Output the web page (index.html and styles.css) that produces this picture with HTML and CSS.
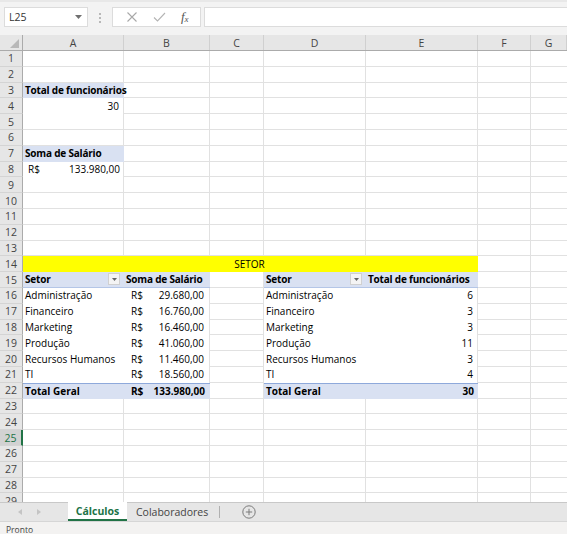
FILE: index.html
```html
<!DOCTYPE html>
<html lang="pt-BR">
<head>
    <meta charset="UTF-8">
    <meta name="viewport" content="width=device-width, initial-scale=1.0">
    <title>Cálculos - Planilha</title>
    <link rel="stylesheet" href="styles.css">
</head>
<body>
<div class="app">

    <!-- name box + formula bar -->
    <div class="formula-bar">
        <div class="name-box">
            <span>L25</span>
            <svg class="caret" width="7" height="4" viewBox="0 0 7 4"><path d="M0 0h7L3.5 4z" fill="#707070"/></svg>
        </div>
        <div class="grip"><i></i><i></i><i></i></div>
        <div class="fx-buttons">
            <svg width="12" height="12" viewBox="0 0 12 12"><path d="M1.5 1.5l9 9M10.5 1.5l-9 9" stroke="#a8a8a8" stroke-width="1.1" fill="none"/></svg>
            <svg width="13" height="12" viewBox="0 0 13 12"><path d="M1 6.5l3.5 3.5L12 2" stroke="#b4b4b4" stroke-width="1.1" fill="none"/></svg>
            <span class="fx">f<sub>x</sub></span>
        </div>
        <div class="formula-input"></div>
    </div>

    <div class="sheet">
        <div class="row col-head">
            <div class="corner"><svg width="9" height="9" viewBox="0 0 9 9"><path d="M9 0v9H0z" fill="#b8b8b8"/></svg></div>
            <div>A</div><div>B</div><div>C</div><div>D</div><div>E</div><div>F</div><div>G</div>
        </div>

        <div class="grid">
            <div class="row"><div class="rh">1</div></div>
            <div class="row"><div class="rh">2</div></div>
            <div class="row">
                <div class="rh">3</div>
                <div class="cell col-a pv-head spill">Total de funcionários</div>
            </div>
            <div class="row">
                <div class="rh">4</div>
                <div class="cell col-a pv edge num">30</div>
            </div>
            <div class="row"><div class="rh">5</div></div>
            <div class="row"><div class="rh">6</div></div>
            <div class="row">
                <div class="rh">7</div>
                <div class="cell col-a pv-head">Soma de Salário</div>
            </div>
            <div class="row">
                <div class="rh">8</div>
                <div class="cell col-a pv edge money first"><span>R$</span><span>133.980,00</span></div>
            </div>
            <div class="row"><div class="rh">9</div></div>
            <div class="row"><div class="rh">10</div></div>
            <div class="row"><div class="rh">11</div></div>
            <div class="row"><div class="rh">12</div></div>
            <div class="row"><div class="rh">13</div></div>
            <div class="row">
                <div class="rh">14</div>
                <div class="cell banner">SETOR</div>
            </div>

            <!-- pivot tables -->
            <div class="row">
                <div class="rh">15</div>
                <div class="cell col-a pv-head top">Setor <span class="filter"><svg width="5" height="3" viewBox="0 0 5 3"><path d="M0 0h5L2.5 3z" fill="#666"/></svg></span></div>
                <div class="cell col-b pv-head top">Soma de Salário</div>
                <div class="cell col-d pv-head top">Setor <span class="filter"><svg width="5" height="3" viewBox="0 0 5 3"><path d="M0 0h5L2.5 3z" fill="#666"/></svg></span></div>
                <div class="cell col-e pv-head top">Total de funcionários</div>
            </div>
            <div class="row">
                <div class="rh">16</div>
                <div class="cell col-a pv">Administração</div>
                <div class="cell col-b pv edge money"><span>R$</span><span>29.680,00</span></div>
                <div class="cell col-d pv">Administração</div>
                <div class="cell col-e pv edge num">6</div>
            </div>
            <div class="row">
                <div class="rh">17</div>
                <div class="cell col-a pv">Financeiro</div>
                <div class="cell col-b pv edge money"><span>R$</span><span>16.760,00</span></div>
                <div class="cell col-d pv">Financeiro</div>
                <div class="cell col-e pv edge num">3</div>
            </div>
            <div class="row">
                <div class="rh">18</div>
                <div class="cell col-a pv">Marketing</div>
                <div class="cell col-b pv edge money"><span>R$</span><span>16.460,00</span></div>
                <div class="cell col-d pv">Marketing</div>
                <div class="cell col-e pv edge num">3</div>
            </div>
            <div class="row">
                <div class="rh">19</div>
                <div class="cell col-a pv">Produção</div>
                <div class="cell col-b pv edge money"><span>R$</span><span>41.060,00</span></div>
                <div class="cell col-d pv">Produção</div>
                <div class="cell col-e pv edge num">11</div>
            </div>
            <div class="row">
                <div class="rh">20</div>
                <div class="cell col-a pv">Recursos Humanos</div>
                <div class="cell col-b pv edge money"><span>R$</span><span>11.460,00</span></div>
                <div class="cell col-d pv">Recursos Humanos</div>
                <div class="cell col-e pv edge num">3</div>
            </div>
            <div class="row">
                <div class="rh">21</div>
                <div class="cell col-a pv">TI</div>
                <div class="cell col-b pv edge money"><span>R$</span><span>18.560,00</span></div>
                <div class="cell col-d pv">TI</div>
                <div class="cell col-e pv edge num">4</div>
            </div>
            <div class="row">
                <div class="rh">22</div>
                <div class="cell col-a pv-total">Total Geral</div>
                <div class="cell col-b pv-total money"><span>R$</span><span>133.980,00</span></div>
                <div class="cell col-d pv-total">Total Geral</div>
                <div class="cell col-e pv-total num">30</div>
            </div>

            <div class="row"><div class="rh">23</div></div>
            <div class="row"><div class="rh">24</div></div>
            <div class="row"><div class="rh active">25</div></div>
            <div class="row"><div class="rh">26</div></div>
            <div class="row"><div class="rh">27</div></div>
            <div class="row"><div class="rh">28</div></div>
            <div class="row"><div class="rh">29</div></div>
        </div>
    </div>

    <div class="tab-bar">
        <div class="tab-nav">
            <svg width="4" height="6" viewBox="0 0 4 6"><path d="M4 0v6L0 3z" fill="#c4c4c4"/></svg>
            <svg width="4" height="6" viewBox="0 0 4 6"><path d="M0 0v6l4-3z" fill="#c4c4c4"/></svg>
        </div>
        <div class="tab active">Cálculos</div>
        <div class="tab">Colaboradores</div>
        <div class="tab-sep"></div>
        <svg class="add-sheet" width="14" height="14" viewBox="0 0 14 14">
            <circle cx="7" cy="7" r="6.2" fill="none" stroke="#7a7a7a" stroke-width="1"/>
            <path d="M7 3.8v6.4M3.8 7h6.4" stroke="#7a7a7a" stroke-width="1"/>
        </svg>
    </div>

    <div class="status-bar">Pronto</div>
</div>
</body>
</html>
```

FILE: styles.css
```css
* {
    box-sizing: border-box;
}

body {
    margin: 0;
    font-family: 'Open Sans', 'Liberation Sans', sans-serif;
    font-size: 10px;
    color: #000;
    background: #fff;
    overflow: hidden;
}

.app {
    width: 567px;
    height: 534px;
    display: flex;
    flex-direction: column;
}

/* ---------- formula bar ---------- */

.formula-bar {
    height: 35px;
    flex: none;
    display: flex;
    align-items: flex-start;
    padding-top: 7px;
    background: #f3f3f3;
    border-top: 2px solid #e8e8e8;
}

.name-box {
    width: 84px;
    height: 20px;
    margin-left: 4px;
    margin-top: -2px;
    background: #fff;
    border: 1px solid #dcdcdc;
    display: flex;
    align-items: center;
    justify-content: space-between;
    padding: 0 5px 0 4px;
    font-size: 10.5px;
    color: #333;
}

.grip {
    width: 24px;
    height: 18px;
    display: flex;
    flex-direction: column;
    align-items: center;
    justify-content: center;
    gap: 2px;
}

.grip i {
    width: 2px;
    height: 2px;
    background: #b8b8b8;
}

.fx-buttons {
    width: 89px;
    height: 20px;
    margin-top: -2px;
    background: #fff;
    border: 1px solid #dcdcdc;
    display: flex;
    align-items: center;
    justify-content: space-around;
    padding: 0 4px 0 6px;
}

.fx {
    font-family: 'Liberation Serif', serif;
    font-style: italic;
    font-size: 13px;
    color: #555;
    line-height: 1;
}

.fx sub {
    font-size: 9px;
    vertical-align: -1px;
}

.formula-input {
    flex: 1;
    height: 20px;
    margin-top: -2px;
    margin-left: 3px;
    background: #fff;
    border: 1px solid #dcdcdc;
    border-right: none;
}

/* ---------- sheet ---------- */

.sheet {
    flex: 1;
    overflow: hidden;
    display: flex;
    flex-direction: column;
}

.row {
    display: grid;
    grid-template-columns: 23px 101px 86px 54px 102px 112px 53px 36px;
}

.col-head {
    height: 16px;
    flex: none;
    background: #e6e6e6;
    border-bottom: 1px solid #ababab;
    color: #444;
    font-size: 10.5px;
}

.col-head div {
    display: flex;
    align-items: center;
    justify-content: center;
    border-right: 1px solid #d0d0d0;
}

.col-head .corner {
    justify-content: flex-end;
    align-items: flex-end;
    padding: 0 3px 2px 0;
    border-right: 1px solid #ababab;
}

.grid {
    flex: 1;
    background:
        linear-gradient(#e1e1e1, #e1e1e1) 123px 0 / 1px 100% no-repeat,
        linear-gradient(#e1e1e1, #e1e1e1) 209px 0 / 1px 100% no-repeat,
        linear-gradient(#e1e1e1, #e1e1e1) 263px 0 / 1px 100% no-repeat,
        linear-gradient(#e1e1e1, #e1e1e1) 365px 0 / 1px 100% no-repeat,
        linear-gradient(#e1e1e1, #e1e1e1) 477px 0 / 1px 100% no-repeat,
        linear-gradient(#e1e1e1, #e1e1e1) 530px 0 / 1px 100% no-repeat,
        #fff;
}

.grid .row {
    height: 15.8px;
    border-bottom: 1px solid #e1e1e1;
}

.rh {
    grid-column: 1;
    margin-bottom: -1px;
    background: #e6e6e6;
    border-right: 1px solid #ababab;
    border-bottom: 1px solid #d4d4d4;
    color: #444;
    font-size: 10.5px;
    display: flex;
    align-items: center;
    justify-content: center;
}

.rh.active {
    background: #d2d2d2;
    color: #217346;
    border-right: 2px solid #217346;
}

.cell {
    display: flex;
    align-items: center;
    padding: 0 4px 1px 2px;
    white-space: nowrap;
    margin-bottom: -1px;
}

.col-a { grid-column: 2; }
.col-b { grid-column: 3; }
.col-d { grid-column: 5; }
.col-e { grid-column: 6; }

.spill {
    overflow: visible;
    position: relative;
    z-index: 1;
}

.num {
    justify-content: flex-end;
}

.money {
    justify-content: space-between;
    padding-left: 7px;
    padding-right: 5px;
}

.money.first {
    padding-left: 5px;
    padding-right: 3px;
}

.banner {
    grid-column: 2 / 7;
    background: #ffff00;
    justify-content: center;
}

/* pivot table look */

.pv {
    background: #fff;
}

/* keep the column gridline visible at the pivot's right side */
.pv.edge {
    margin-right: 1px;
}

.pv-head {
    background: #d9e1f2;
    font-weight: 700;
    letter-spacing: -0.2px;
}

.pv-head.top {
    border-bottom: 1px solid #b4c6e7;
}

.pv-total {
    background: #d9e1f2;
    font-weight: 700;
    border-top: 1px solid #8ea9db;
}

.filter {
    margin-left: auto;
    width: 12px;
    height: 12px;
    background: #f4f4f4;
    border: 1px solid #d0d0d0;
    display: flex;
    align-items: center;
    justify-content: center;
}

/* ---------- sheet tabs ---------- */

.tab-bar {
    height: 19px;
    flex: none;
    background: #e6e6e6;
    border-top: 1px solid #c8c8c8;
    display: flex;
    align-items: stretch;
}

.tab-nav {
    width: 68px;
    display: flex;
    align-items: center;
    gap: 15px;
    padding-left: 18px;
}

.tab {
    padding: 0 9px;
    display: flex;
    align-items: center;
    font-size: 10.5px;
    color: #444;
}

.tab.active {
    width: 59px;
    justify-content: center;
    background: #fff;
    color: #217346;
    font-weight: 700;
    border-bottom: 2px solid #217346;
    margin-top: -1px;
}

.tab-sep {
    width: 1px;
    margin: 3px 0 3px 2px;
    background: #b0b0b0;
}

.add-sheet {
    align-self: center;
    margin-left: 22px;
}

.status-bar {
    height: 13px;
    flex: none;
    background: #f3f2f1;
    border-top: 1px solid #d6d6d6;
    font-size: 8.5px;
    color: #444;
    padding: 2px 0 0 6px;
    line-height: 12px;
}
```
